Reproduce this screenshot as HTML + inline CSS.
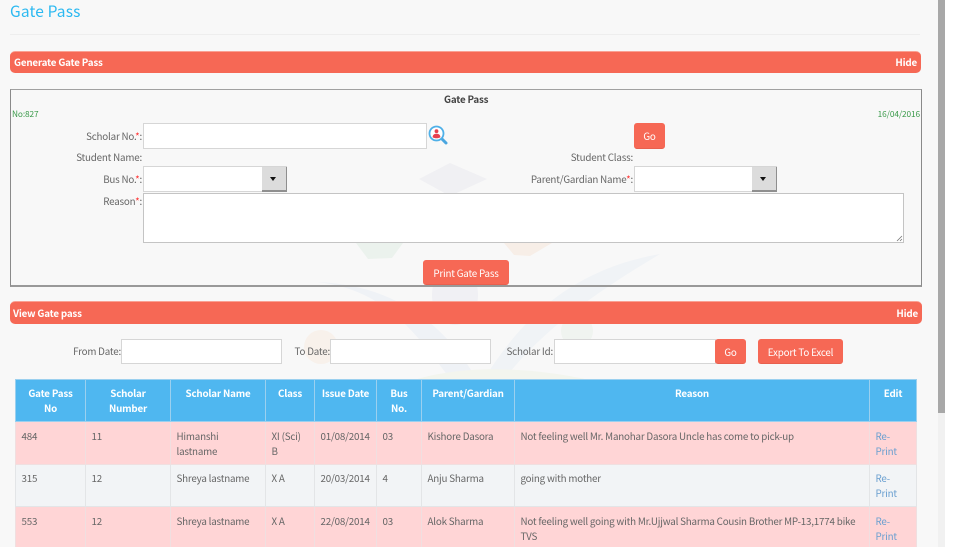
<!DOCTYPE html>
<html><head><meta charset="utf-8"><style>
html,body{margin:0;padding:0;background:#fff;overflow:hidden}
body{width:957px;height:557px;position:relative;font-family:"Noto Sans CJK JP","Liberation Sans",sans-serif;font-size:9.8px;letter-spacing:-.2px;color:#666}
#p{position:absolute;left:0;top:0;width:938px;height:547px;background:#f8f8f8;overflow:hidden}
.a{position:absolute;white-space:nowrap}
.bar{position:absolute;background:#f66855;border-radius:5px;height:22px;color:#fff;font-weight:700;line-height:20px;box-sizing:border-box;border-top:1px solid #f9a193}
.in{position:absolute;background:#fff;border:1px solid #d6d6d6;box-sizing:border-box}
.btn{position:absolute;background:#f66855;border-radius:3px;color:#fff;text-align:center;box-sizing:border-box;border-bottom:1px solid #e8604e}
.l{position:absolute;text-align:right;white-space:nowrap;line-height:14px;color:#666}
.l i{color:#f33;font-style:normal}
.dd{position:absolute;top:0;width:25px;height:25px;background:#dcdcdc;border-right:1px solid #8f8f8f;border-bottom:2px solid #8f8f8f;box-sizing:border-box}
.dd:after{content:"";position:absolute;left:8px;top:10px;border:3px solid transparent;border-top:4px solid #111;border-bottom:0}
table{position:absolute;left:15px;top:379px;border-collapse:collapse;table-layout:fixed;width:901px;line-height:15px}
th{background:#4fb7f0;color:#fff;font-weight:700;vertical-align:top;text-align:center;padding:6px 5px 0;border:1px solid #9bd0ef;height:35px;box-sizing:content-box}
td{vertical-align:top;padding:7px 5.5px 0;border:1px solid #e2e2e2;height:34.5px;color:#666;overflow:hidden}
tr.r td{background:#ffd5d6;border-color:#f0dfe0}
tr.g td{background:#f2f4f6;border-color:#e3e5e7}
tr.g td{padding-top:6px;height:35.5px}
a{color:#6a9fd0;text-decoration:none}
</style></head><body>
<div id="p">
<svg class="a" style="left:0;top:0" width="938" height="547">
<polygon points="450,163 487,179 450,196 419,179" fill="#f0f0f3"/>
<polygon points="356,243 403,243 392,258 368,259" fill="#ebf2ed"/>
<polygon points="504,243 552,243 530,256 514,255" fill="#f7eee7"/>
<path d="M317 282C390 290 420 340 455 385H480C450 330 400 285 317 282Z" fill="#eff2f6"/>
<path d="M480 385C520 320 570 270 660 254C600 290 540 330 500 385Z" fill="#f0f3f6"/>
<circle cx="321" cy="347" r="17" fill="#f8f1eb"/>
<circle cx="577" cy="331" r="16" fill="#f0f4f0"/>
<ellipse cx="455" cy="295" rx="23" ry="30" fill="#f0f0f4"/>
<path d="M400 385C450 365 520 365 590 380V385Z" fill="#f3f5ee"/>
</svg>
<div class="a" style="left:10px;top:1px;font-size:15.5px;line-height:20px;color:#2cb9f1;letter-spacing:.15px">Gate Pass</div>
<div class="a" style="left:10px;top:34px;width:910px;height:1px;background:#eee"></div>

<div class="bar" style="left:10px;top:51px;width:911px"><span class="a" style="left:4px">Generate Gate Pass</span><span class="a" style="right:4px">Hide</span></div>

<div class="a" style="left:10px;top:89px;width:912px;height:198px;border:1px solid #8a8a8a;border-top-color:#a0a0a0;border-bottom:2px solid #999;box-sizing:border-box"></div>
<div class="a" style="left:444px;top:92px;font-weight:700;color:#444;line-height:14px">Gate Pass</div>
<div class="a" style="left:12px;top:108px;font-size:8.3px;letter-spacing:-.1px;color:#3a9a4a;line-height:12px">No:827</div>
<div class="a" style="right:18px;top:108px;font-size:8.3px;letter-spacing:-.1px;color:#3a9a4a;line-height:12px">16/04/2016</div>

<div class="l" style="right:796px;top:129px">Scholar No.<i>*</i>:</div>
<div class="in" style="left:143px;top:123px;width:284px;height:26px"></div>
<svg class="a" style="left:428px;top:125px" width="21" height="21" viewBox="0 0 21 21"><line x1="13.5" y1="13.5" x2="18" y2="18" stroke="#4aa6e0" stroke-width="3" stroke-linecap="round"/><circle cx="8.5" cy="8.5" r="7" fill="#fff" stroke="#4fb0e8" stroke-width="1.8"/><circle cx="8.5" cy="6.2" r="1.9" fill="#e8404f"/><path d="M4.6 12.2C4.8 9.6 6.5 8.8 8.5 8.8S12.2 9.6 12.4 12.2C10 13.6 7 13.6 4.6 12.2Z" fill="#e8404f"/></svg>
<div class="btn" style="left:634px;top:123px;width:31px;height:26px;line-height:26px">Go</div>

<div class="l" style="right:796px;top:150px">Student Name:</div>
<div class="l" style="right:305px;top:150px">Student Class:</div>

<div class="l" style="right:796px;top:172px">Bus No.<i>*</i>:</div>
<div class="in" style="left:143px;top:166px;width:144px;height:26px"><div class="dd" style="right:-1px;top:0"></div></div>
<div class="l" style="right:305px;top:172px">Parent/Gardian Name<i>*</i>:</div>
<div class="in" style="left:634px;top:166px;width:143px;height:26px"><div class="dd" style="right:-1px;top:0"></div></div>

<div class="l" style="right:796px;top:194px">Reason<i>*</i>:</div>
<div class="in" style="left:143px;top:193px;width:761px;height:50px;border-color:#c4c4c4">
<svg class="a" style="right:0;bottom:0" width="7" height="7"><path d="M1 6L6 1M4 6L6 4" stroke="#777" stroke-width=".8"/></svg></div>

<div class="btn" style="left:423px;top:260px;width:86px;height:25px;line-height:26px">Print Gate Pass</div>

<div class="bar" style="left:10px;top:301px;width:912px;height:23px;line-height:22px"><span class="a" style="left:3px">View Gate pass</span><span class="a" style="right:4px">Hide</span></div>

<div class="l" style="right:817px;top:344px">From Date:</div>
<div class="in" style="left:121px;top:339px;width:161px;height:25px"></div>
<div class="l" style="right:608px;top:344px">To Date:</div>
<div class="in" style="left:330px;top:339px;width:161px;height:25px"></div>
<div class="l" style="right:385px;top:344px">Scholar Id:</div>
<div class="in" style="left:554px;top:339px;width:162px;height:25px"></div>
<div class="btn" style="left:715px;top:339px;width:31px;height:25px;line-height:26px">Go</div>
<div class="btn" style="left:758px;top:339px;width:85px;height:25px;line-height:26px">Export To Excel</div>

<table>
<colgroup><col style="width:70px"><col style="width:85px"><col style="width:95px"><col style="width:49px"><col style="width:62px"><col style="width:45px"><col style="width:93px"><col style="width:355px"><col style="width:47px"></colgroup>
<tr><th>Gate Pass No</th><th>Scholar Number</th><th>Scholar Name</th><th>Class</th><th style="padding-left:2px;padding-right:2px">Issue Date</th><th>Bus No.</th><th>Parent/Gardian</th><th>Reason</th><th>Edit</th></tr>
<tr class="r"><td>484</td><td>11</td><td>Himanshi lastname</td><td>XI (Sci) B</td><td style="padding-right:0">01/08/2014</td><td>03</td><td>Kishore Dasora</td><td>Not feeling well Mr. Manohar Dasora Uncle has come to pick-up</td><td><a>Re-Print</a></td></tr>
<tr class="g"><td>315</td><td>12</td><td>Shreya lastname</td><td>X A</td><td style="padding-right:0">20/03/2014</td><td>4</td><td>Anju Sharma</td><td>going with mother</td><td><a>Re-Print</a></td></tr>
<tr class="r"><td>553</td><td>12</td><td>Shreya lastname</td><td>X A</td><td style="padding-right:0">22/08/2014</td><td>03</td><td>Alok Sharma</td><td>Not feeling well going with Mr.Ujjwal Sharma Cousin Brother MP-13,1774 bike TVS</td><td><a>Re-Print</a></td></tr>
</table>
</div>
<div class="a" style="left:938px;top:0;width:7px;height:547px;background:#f1f1f1"></div>
<div class="a" style="left:938px;top:0;width:7px;height:413px;background:#a8a8a8"></div>
</body></html>
